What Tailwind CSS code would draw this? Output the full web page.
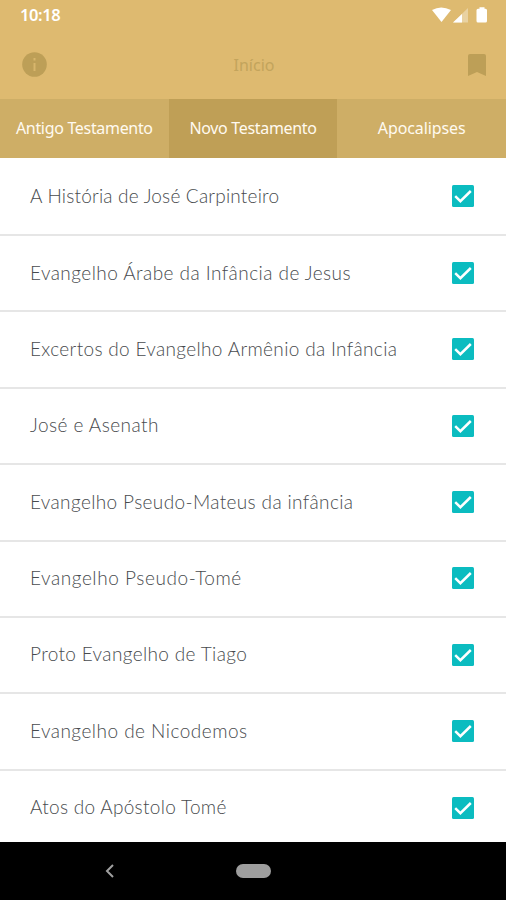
<!DOCTYPE html>
<html lang="pt">
<head>
<meta charset="utf-8">
<title>Início</title>
<script src="https://cdn.jsdelivr.net/npm/@tailwindcss/browser@4"></script>
</head>
<body class="w-[506px] h-[900px] overflow-hidden bg-white">
<svg class="hidden"><symbol id="check" viewBox="0 0 22 22"><rect width="22" height="22" rx="1.5" fill="#0bbcc0"/><path d="M3.2 11.2 8.4 16.2 18.8 6" fill="none" stroke="#fff" stroke-width="2.5"/></symbol></svg>
<div class="flex flex-col h-full font-['Noto_Sans',sans-serif]">
<header class="bg-[#deba70] shrink-0">
  <div class="h-[30px] flex items-center justify-between pl-5 pr-[18px]">
    <span class="text-[16.5px] leading-[30px] font-semibold text-white tracking-[-0.4px]">10:18</span>
    <svg class="w-[57px] h-[17px]" viewBox="0 0 57 17" fill="#fff"><path d="M1 3Q10 -2 20 3L10.5 15Z"/><path d="M22 15.5 37 1V15.5Z" opacity=".35"/><path d="M22 15.5 31 7V15.5Z"/><path d="M48.500 .2h5v1.500h1q1.500 0 1.500 1.500V14q0 1.500-1.500 1.500h-7.500q-1.500 0-1.500-1.500V3.200q0-1.500 1.500-1.500h1.500z"/></svg>
  </div>
  <div class="h-[69px] grid grid-cols-3 items-center pl-[22px] pr-5">
    <svg class="w-[25px] h-[25px]" viewBox="0 0 25 25"><circle cx="12.500" cy="12.500" r="12.300" fill="#bd9f57"/><path d="M11.500 6h2v2.500h-2zM11.500 11h2v8h-2z" fill="#d8b66c"/></svg>
    <h1 class="text-[16px] text-[#c3a45c] text-center">Início</h1>
    <svg class="w-[18px] h-[22px] justify-self-end" viewBox="0 0 18 22" fill="#bd9f57"><path d="M2 0h14q2 0 2 2v20l-9-4-9 4V2q0-2 2-2z"/></svg>
  </div>
  <nav class="h-[58.500px] grid grid-cols-3 text-center text-[16px] leading-[59px] tracking-[-0.32px] text-[#fffaf0] whitespace-nowrap">
    <div class="bg-[#ceae66]">Antigo Testamento</div><div class="bg-[#bf9f56]">Novo Testamento</div><div class="bg-[#ceae66] tracking-[-0.1px]">Apocalipses</div>
  </nav>
</header>
<main class="flex-1 min-h-0 overflow-hidden pt-[2.200px] text-[19px] font-light text-[#484b4e] font-['Lato',sans-serif] whitespace-nowrap">
  <div class="h-[76.400px] pl-[30px] pr-[32.500px] pb-px flex items-center justify-between border-b-2 border-[#e6e6e6]"><span class="tracking-[0.2px]">A História de José Carpinteiro</span><svg class="w-[22px] h-[22px]"><use href="#check"/></svg></div>
  <div class="h-[76.400px] pl-[30px] pr-[32.500px] pb-px flex items-center justify-between border-b-2 border-[#e6e6e6]"><span class="tracking-[0.450px]">Evangelho Árabe da Infância de Jesus</span><svg class="w-[22px] h-[22px]"><use href="#check"/></svg></div>
  <div class="h-[76.400px] pl-[30px] pr-[32.500px] pb-px flex items-center justify-between border-b-2 border-[#e6e6e6]"><span class="tracking-[0.340px]">Excertos do Evangelho Armênio da Infância</span><svg class="w-[22px] h-[22px]"><use href="#check"/></svg></div>
  <div class="h-[76.400px] pl-[30px] pr-[32.500px] pb-px flex items-center justify-between border-b-2 border-[#e6e6e6]"><span class="tracking-[0.450px]">José e Asenath</span><svg class="w-[22px] h-[22px]"><use href="#check"/></svg></div>
  <div class="h-[76.400px] pl-[30px] pr-[32.500px] pb-px flex items-center justify-between border-b-2 border-[#e6e6e6]"><span class="tracking-[0.370px]">Evangelho Pseudo-Mateus da infância</span><svg class="w-[22px] h-[22px]"><use href="#check"/></svg></div>
  <div class="h-[76.400px] pl-[30px] pr-[32.500px] pb-px flex items-center justify-between border-b-2 border-[#e6e6e6]"><span class="tracking-[0.570px]">Evangelho Pseudo-Tomé</span><svg class="w-[22px] h-[22px]"><use href="#check"/></svg></div>
  <div class="h-[76.400px] pl-[30px] pr-[32.500px] pb-px flex items-center justify-between border-b-2 border-[#e6e6e6]"><span class="tracking-[0.360px]">Proto Evangelho de Tiago</span><svg class="w-[22px] h-[22px]"><use href="#check"/></svg></div>
  <div class="h-[76.400px] pl-[30px] pr-[32.500px] pb-px flex items-center justify-between border-b-2 border-[#e6e6e6]"><span class="tracking-[0.480px]">Evangelho de Nicodemos</span><svg class="w-[22px] h-[22px]"><use href="#check"/></svg></div>
  <div class="h-[74.400px] pl-[30px] pr-[32.500px] pb-px flex items-center justify-between"><span class="tracking-[0.3px]">Atos do Apóstolo Tomé</span><svg class="w-[22px] h-[22px]"><use href="#check"/></svg></div>
</main>
<footer class="h-[58px] shrink-0 bg-black flex items-center">
  <svg class="w-[9px] h-[14px] ml-[105px]" viewBox="0 0 9 14" fill="none" stroke="#a0a0a0" stroke-width="2"><path d="M8 1 2 7l6 6"/></svg>
  <div class="w-[35px] h-[14px] ml-[122px] rounded-full bg-[#9e9e9e]"></div>
</footer>
</div>
</body>
</html>
